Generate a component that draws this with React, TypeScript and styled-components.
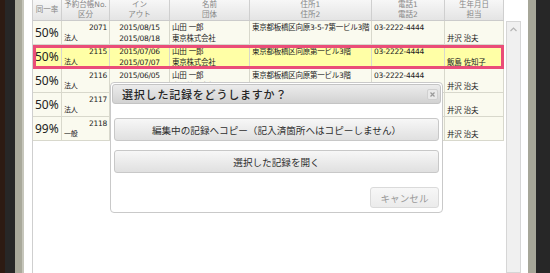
import styled, { createGlobalStyle } from "styled-components";

interface Reservation {
    rate: string
    no: string
    kind: string
    checkIn: string
    checkOut: string
    name: string
    org: string
    address: string
    tel: string
    staff: string
    selected?: boolean
}

const rows: Reservation[] = [
    { rate: "50%", no: "2071", kind: "法人", checkIn: "2015/08/15", checkOut: "2015/08/18", name: "山田 一郎", org: "東京株式会社", address: "東京都板橋区向原3-5-7第一ビル3階", tel: "03-2222-4444", staff: "井沢 治夫" },
    { rate: "50%", no: "2115", kind: "法人", checkIn: "2015/07/06", checkOut: "2015/07/07", name: "山田 一郎", org: "東京株式会社", address: "東京都板橋区向原第一ビル3階", tel: "03-2222-4444", staff: "飯島 佐知子", selected: true },
    { rate: "50%", no: "2116", kind: "法人", checkIn: "2015/06/05", checkOut: "2015/06/06", name: "山田 一郎", org: "東京株式会社", address: "東京都板橋区向原第一ビル3階", tel: "03-2222-4444", staff: "井沢 治夫" },
    { rate: "50%", no: "2117", kind: "法人", checkIn: "2015/05/11", checkOut: "2015/05/12", name: "山田 一郎", org: "東京株式会社", address: "東京都板橋区向原第一ビル3階", tel: "03-2222-4444", staff: "井沢 治夫" },
    { rate: "99%", no: "2118", kind: "一般", checkIn: "2015/04/20", checkOut: "2015/04/21", name: "山田 一郎", org: "", address: "東京都板橋区向原第一ビル3階", tel: "03-2222-4444", staff: "井沢 治夫" },
]

const GlobalStyle = createGlobalStyle`
    html, body {
        margin: 0;
        padding: 0;
        height: 100%;
        overflow: hidden;
    }
    body {
        background: #262626;
        font-family: "DejaVu Sans", "Noto Sans CJK JP", sans-serif;
        color: #222;
    }
`

const Page = styled.div`
    display: flex;
    width: 550px;
    height: 273px;
`
const Stripe = styled.div<{ $w: number; $c: string }>`
    flex: none;
    width: ${p => p.$w}px;
    background: ${p => p.$c};
`
const Panel = styled.main`
    position: relative;
    flex: none;
    width: 504px;
    box-sizing: border-box;
    padding: 0 7px 0 8px;
    display: flex;
    gap: 2px;
    background: #fff;
`
const ListPane = styled.section`
    width: 472px;
    border-left: 1px solid #cfcfcf;
    box-sizing: border-box;
`
const COLS = "29px 48px 60px 80px 122px 73px 59px"

const HeaderRow = styled.div`
    display: grid;
    grid-template-columns: ${COLS};
    height: 21px;
    background: linear-gradient(#f7f7f7, #e4e4e4);
    border-bottom: 1px solid #cbcbcb;
    box-sizing: border-box;
`
const HeaderCell = styled.div`
    display: flex;
    flex-direction: column;
    justify-content: center;
    align-items: center;
    border-right: 1px solid #cfcfcf;
    font-size: 7.5px;
    line-height: 10px;
    color: #868686;
    white-space: nowrap;
`
const Row = styled.div<{ $selected?: boolean }>`
    position: relative;
    display: grid;
    grid-template-columns: ${COLS};
    height: 24px;
    box-sizing: border-box;
    background: ${p => (p.$selected ? "#ffffa6" : "#fafaef")};
    border-bottom: 1px solid #d8d8cc;
    ${p => p.$selected && "outline: 3px solid #ea4d78; outline-offset: -3px; z-index: 1;"}
`
const Cell = styled.div<{ $align?: "left" | "center" | "right" }>`
    display: flex;
    flex-direction: column;
    padding: 1px 2px 0;
    border-right: 1px solid #d8d8cc;
    overflow: hidden;
    text-align: ${p => p.$align ?? "left"};
`
const Line = styled.span<{ $small?: boolean; $align?: "left" | "right" }>`
    display: block;
    height: 11px;
    line-height: 11px;
    font-size: ${p => (p.$small ? "7px" : "7.5px")};
    letter-spacing: -0.25px;
    text-align: ${p => p.$align ?? "inherit"};
    white-space: nowrap;
`
const Rate = styled.div`
    display: flex;
    align-items: center;
    padding-left: 2px;
    border-right: 1px solid #d8d8cc;
    font-family: "Noto Sans", sans-serif;
    font-size: 12px;
    color: #222;
`
const ScrollBar = styled.div`
    flex: none;
    width: 15px;
    margin-top: 21px;
    box-sizing: border-box;
    border: 1px solid #d6d6d6;
    background: #f0f0f0;
    display: flex;
    justify-content: center;
    padding-top: 5px;
`

const Dialog = styled.div`
    position: absolute;
    left: 86px;
    top: 82px;
    width: 333px;
    height: 131px;
    box-sizing: border-box;
    padding: 1px;
    background: #fff;
    border: 1px solid #c9c9c9;
    border-radius: 4px;
    display: flex;
    flex-direction: column;
    z-index: 5;
`
const TitleBar = styled.div`
    height: 20px;
    box-sizing: border-box;
    border: 1px solid #c4c4c4;
    border-radius: 3px;
    background: linear-gradient(#ececec, #d2d2d2);
    display: flex;
    align-items: center;
    justify-content: space-between;
    padding: 0 2px 0 9px;
`
const Title = styled.span`
    font-family: "Noto Sans CJK JP", sans-serif;
    font-size: 11px;
    font-weight: 500;
    letter-spacing: 0.8px;
    color: #262626;
`
const CloseButton = styled.span`
    width: 11px;
    height: 11px;
    box-sizing: border-box;
    border: 1px solid #d0d0d0;
    border-radius: 2px;
    background: #e9e9e9;
    display: flex;
    align-items: center;
    justify-content: center;
`
const DialogBody = styled.div`
    display: flex;
    flex-direction: column;
    padding: 14px 2px 0;
    gap: 9px;
`
const Button = styled.button`
    height: 23px;
    box-sizing: border-box;
    border: 1px solid #c8c8c8;
    border-radius: 3px;
    background: linear-gradient(#f7f7f7, #e0e0e0);
    font-family: "Noto Sans CJK JP", sans-serif;
    font-size: 9.6px;
    color: #2e2e2e;
    padding: 0;
`
const CancelButton = styled(Button)`
    align-self: flex-end;
    width: 69px;
    height: 21px;
    margin-top: 5px;
    border-color: #dadada;
    background: linear-gradient(#f7f7f7, #ebebeb);
    color: #999;
`

const headers: [string, string?][] = [
    ["同一率"],
    ["予約台帳No.", "区分"],
    ["イン", "アウト"],
    ["名前", "団体"],
    ["住所1", "住所2"],
    ["電話1", "電話2"],
    ["生年月日", "担当"],
]

export default function App() {
    return (
        <>
            <GlobalStyle />
            <Page>
                <Stripe $w={5} $c="#2d1b13" />
                <Stripe $w={10} $c="#272727" />
                <Stripe $w={7} $c="#a9a99b" />
                <Stripe $w={2} $c="#c6c6bb" />
                <Panel>
                    <ListPane>
                        <HeaderRow>
                            {headers.map(([a, b]) => (
                                <HeaderCell key={a}>
                                    <span>{a}</span>
                                    {b && <span>{b}</span>}
                                </HeaderCell>
                            ))}
                        </HeaderRow>
                        {rows.map(r => (
                            <Row key={r.no} $selected={r.selected}>
                                <Rate>{r.rate}</Rate>
                                <Cell>
                                    <Line $align="right">{r.no}</Line>
                                    <Line $small>{r.kind}</Line>
                                </Cell>
                                <Cell $align="center">
                                    <Line>{r.checkIn}</Line>
                                    <Line>{r.checkOut}</Line>
                                </Cell>
                                <Cell>
                                    <Line>{r.name}</Line>
                                    <Line>{r.org}</Line>
                                </Cell>
                                <Cell>
                                    <Line>{r.address}</Line>
                                    <Line />
                                </Cell>
                                <Cell>
                                    <Line>{r.tel}</Line>
                                    <Line />
                                </Cell>
                                <Cell>
                                    <Line />
                                    <Line>{r.staff}</Line>
                                </Cell>
                            </Row>
                        ))}
                    </ListPane>
                    <ScrollBar>
                        <svg width="7" height="5" viewBox="0 0 7 5">
                            <polyline points="0.5,4 3.5,1 6.5,4" fill="none" stroke="#b4b4b4" strokeWidth="1.2" />
                        </svg>
                    </ScrollBar>

                    <Dialog>
                        <TitleBar>
                            <Title>選択した記録をどうしますか？</Title>
                            <CloseButton>
                                <svg width="5" height="5" viewBox="0 0 5 5">
                                    <path d="M0.5 0.5 L4.5 4.5 M4.5 0.5 L0.5 4.5" stroke="#999" strokeWidth="1.2" />
                                </svg>
                            </CloseButton>
                        </TitleBar>
                        <DialogBody>
                            <Button>編集中の記録へコピー（記入済箇所へはコピーしません）</Button>
                            <Button>選択した記録を開く</Button>
                            <CancelButton>キャンセル</CancelButton>
                        </DialogBody>
                    </Dialog>
                </Panel>
                <Stripe $w={8} $c="#a6a698" />
                <Stripe $w={14} $c="#272727" />
            </Page>
        </>
    )
}
